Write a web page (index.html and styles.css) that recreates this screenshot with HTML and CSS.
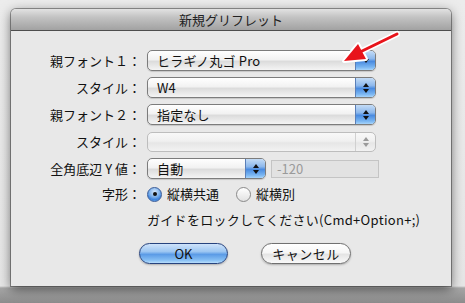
FILE: index.html
```html
<!DOCTYPE html>
<html lang="ja">
<head>
<meta charset="utf-8">
<link rel="stylesheet" href="styles.css">
</head>
<body>
<div class="desk">
  <div class="window">
    <div class="titlebar">新規グリフレット</div>
    <div class="content">
      <div class="form">
        <div class="label">親フォント１：</div>
        <div class="popup wide"><span class="ptext">ヒラギノ丸ゴ Pro</span><span class="pbtn"><i class="dn"></i></span></div>

        <div class="label">スタイル：</div>
        <div class="popup wide"><span class="ptext">W4</span><span class="pbtn"><i class="up"></i><i class="dn"></i></span></div>

        <div class="label">親フォント２：</div>
        <div class="popup wide"><span class="ptext">指定なし</span><span class="pbtn"><i class="up"></i><i class="dn"></i></span></div>

        <div class="label">スタイル：</div>
        <div class="popup wide disabled"><span class="ptext"></span><span class="pbtn"><i class="up"></i><i class="dn"></i></span></div>

        <div class="label">全角底辺 Y 値：</div>
        <div class="inline">
          <div class="popup short"><span class="ptext">自動</span><span class="pbtn"><i class="up"></i><i class="dn"></i></span></div>
          <div class="field">-120</div>
        </div>

        <div class="label radiolabel">字形：</div>
        <div class="radios">
          <span class="radio on"></span><span class="rtext">縦横共通</span>
          <span class="radio off"></span><span class="rtext">縦横別</span>
        </div>

        <div class="label"></div>
        <div class="note">ガイドをロックしてください(Cmd+Option+;)</div>
      </div>
      <div class="buttons">
        <div class="btn ok">OK</div>
        <div class="btn cancel">キャンセル</div>
      </div>
    </div>
  </div>
  <svg class="arrow" width="465" height="303" viewBox="0 0 465 303">
    <line x1="397" y1="34" x2="358" y2="53" stroke="#fff" stroke-width="6" stroke-linecap="round"/>
    <polygon points="344,61 366,59 358,44" fill="#fff" stroke="#fff" stroke-width="4" stroke-linejoin="round"/>
    <line x1="397" y1="34" x2="358" y2="53" stroke="#e8141b" stroke-width="3" stroke-linecap="round"/>
    <polygon points="344,61 366,59 358,44" fill="#e8141b"/>
  </svg>
</div>
</body>
</html>
```

FILE: styles.css
```css
html, body {
  margin: 0;
  padding: 0;
}
body {
  font-family: "Noto Sans CJK JP", "Noto Sans", sans-serif;
  font-size: 13px;
  color: #111;
}
.desk {
  position: relative;
  width: 465px;
  height: 303px;
  overflow: hidden;
  background: linear-gradient(to bottom, #ececec 0, #e6e6e6 286px, #a6a6a6 288px, #8c8c8c 303px);
  padding: 9px 0 0 11px;
  box-sizing: border-box;
}
.window {
  width: 440px;
  height: 277px;
  background: #e8e8e8;
  border-radius: 5px 5px 0 0;
  box-shadow: 0 3px 12px rgba(0,0,0,0.55), 0 0 0 1px rgba(0,0,0,0.35);
  display: flex;
  flex-direction: column;
}
.titlebar {
  height: 21px;
  line-height: 21px;
  text-align: center;
  font-size: 13px;
  color: #222;
  border-radius: 5px 5px 0 0;
  background: linear-gradient(to bottom, #e2e2e2 0, #c2c2c2 40%, #a2a2a2 100%);
  border-bottom: 1px solid #4e4e4e;
}
.content {
  padding-top: 19px;
  display: flex;
  flex-direction: column;
}
.form {
  display: grid;
  grid-template-columns: 130px auto;
  column-gap: 6px;
  row-gap: 6px;
  align-items: center;
}
.label {
  text-align: right;
  line-height: 21px;
  color: #111;
  white-space: nowrap;
}
.popup {
  height: 19px;
  border: 1px solid #7c7c7c;
  border-radius: 5px;
  display: flex;
  overflow: hidden;
  background: linear-gradient(to bottom, #ffffff 0, #f2f2f2 45%, #dcdcdc 55%, #f4f4f4 100%);
  box-shadow: 0 1px 1px rgba(0,0,0,0.15);
}
.popup.wide { width: 227px; }
.popup.short { width: 117px; }
.ptext {
  flex: 1;
  padding-left: 9px;
  line-height: 19px;
  font-size: 13px;
  white-space: nowrap;
  letter-spacing: 0.2px;
}
.pbtn {
  width: 19px;
  display: flex;
  flex-direction: column;
  align-items: center;
  justify-content: center;
  gap: 2px;
  border-left: 1px solid #5a7fb8;
  background: linear-gradient(to bottom, #c4dcf6 0, #8db8ec 40%, #4a8be0 55%, #7ab6f2 85%, #a8d4fa 100%);
}
.pbtn i {
  display: block;
  width: 0;
  height: 0;
  border-left: 3px solid transparent;
  border-right: 3px solid transparent;
}
.pbtn i.up { border-bottom: 4px solid #111; }
.pbtn i.dn { border-top: 4px solid #111; }
.popup.disabled {
  border-color: #bdbdbd;
  background: linear-gradient(to bottom, #f8f8f8 0, #f0f0f0 45%, #e6e6e6 55%, #f2f2f2 100%);
  box-shadow: none;
  height: 18px;
}
.popup.disabled .pbtn {
  background: transparent;
  border-left: 1px solid #d0d0d0;
}
.popup.disabled .pbtn i.up { border-bottom-color: #9a9a9a; }
.popup.disabled .pbtn i.dn { border-top-color: #9a9a9a; }
.inline {
  display: flex;
  align-items: center;
  gap: 5px;
}
.field {
  width: 101px;
  height: 16px;
  line-height: 16px;
  border: 1px solid #c4c4c4;
  background: #e2e2e2;
  color: #9a9a9a;
  padding-left: 5px;
  font-size: 13px;
}
.radios {
  display: flex;
  align-items: center;
  height: 18px;
}
.radiolabel { line-height: 18px; }
.radio {
  width: 15px;
  height: 15px;
  border-radius: 50%;
  box-sizing: border-box;
  display: flex;
  align-items: center;
  justify-content: center;
}
.radio.on {
  border: 1px solid #3a5c98;
  background: radial-gradient(circle at 50% 30%, #d6e8fb 0, #7fb2ec 45%, #3d84de 70%, #8cc3f6 100%);
}
.radio.on::after {
  content: "";
  width: 4px;
  height: 4px;
  border-radius: 50%;
  background: #111;
}
.radio.off {
  margin-left: 17px;
  border: 1px solid #8a8a8a;
  background: linear-gradient(to bottom, #ffffff 0, #f0f0f0 50%, #e2e2e2 100%);
}
.rtext {
  margin-left: 5px;
  line-height: 18px;
}
.note {
  line-height: 21px;
  white-space: nowrap;
  letter-spacing: 0.3px;
}
.buttons {
  display: flex;
  gap: 33px;
  padding-left: 128px;
  margin-top: 13px;
}
.btn {
  height: 19px;
  line-height: 19px;
  border-radius: 11px;
  text-align: center;
  font-size: 13px;
  box-shadow: 0 1px 2px rgba(0,0,0,0.25);
}
.btn.ok {
  width: 87px;
  border: 1px solid #27437e;
  background: linear-gradient(to bottom, #cfe3fa 0, #9cc6f2 40%, #5b9be6 55%, #86bff4 85%, #b8defc 100%);
}
.btn.cancel {
  width: 88px;
  border: 1px solid #707070;
  letter-spacing: 0.5px;
  background: linear-gradient(to bottom, #ffffff 0, #f6f6f6 45%, #e4e4e4 55%, #fafafa 100%);
}
.arrow {
  position: absolute;
  left: 0;
  top: 0;
}
```
